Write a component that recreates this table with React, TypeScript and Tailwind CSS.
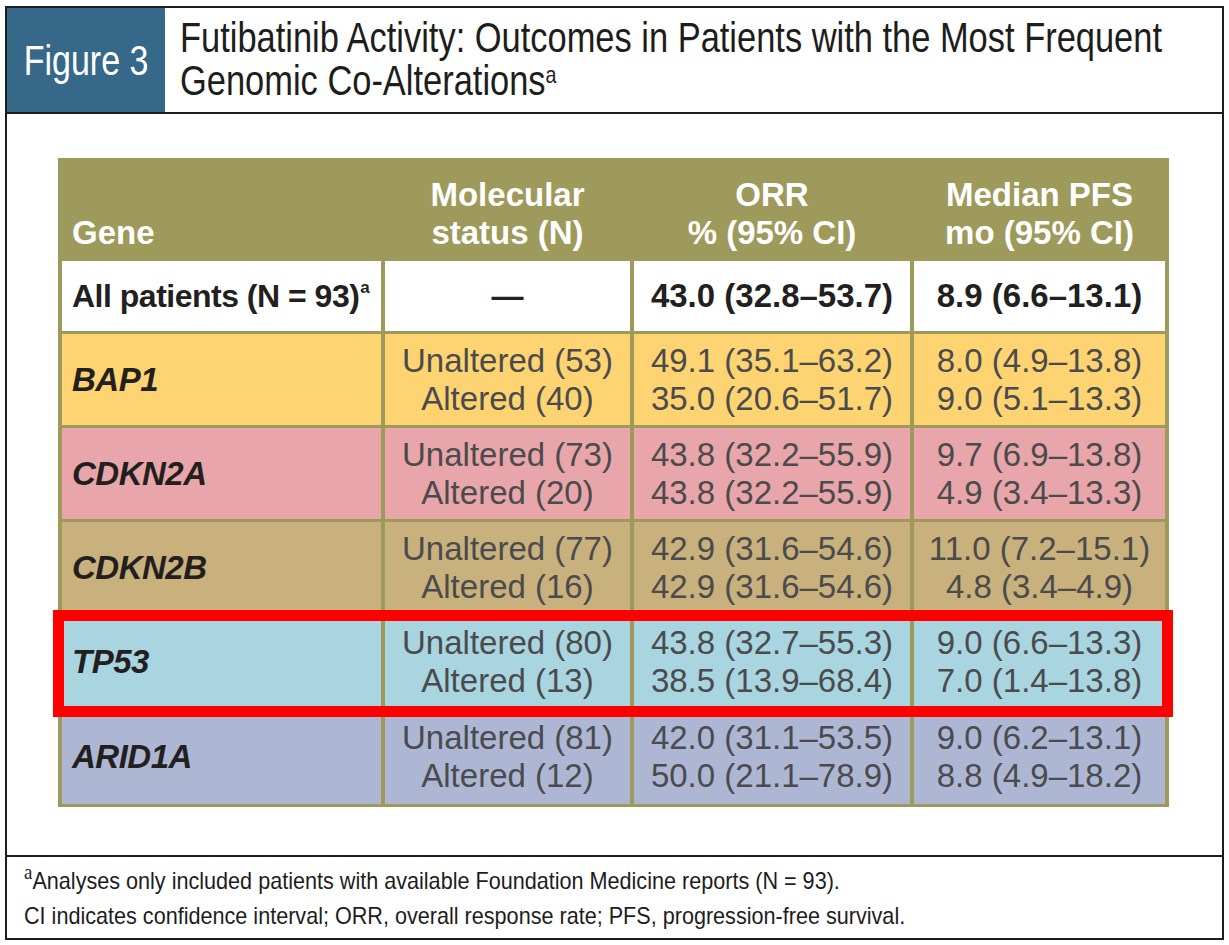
const sans = "font-['Liberation_Sans',Arial,sans-serif]";
const squeeze = 'inline-block whitespace-nowrap';

type Row = {
  gene: string;
  bg: string;
  status: [string, string];
  orr: [string, string];
  pfs: [string, string];
  highlight?: boolean;
  last?: boolean;
};

const rows: Row[] = [
  {
    gene: 'BAP1',
    bg: 'bg-[#fdd471]',
    status: ['Unaltered (53)', 'Altered (40)'],
    orr: ['49.1 (35.1–63.2)', '35.0 (20.6–51.7)'],
    pfs: ['8.0 (4.9–13.8)', '9.0 (5.1–13.3)'],
  },
  {
    gene: 'CDKN2A',
    bg: 'bg-[#e8a6aa]',
    status: ['Unaltered (73)', 'Altered (20)'],
    orr: ['43.8 (32.2–55.9)', '43.8 (32.2–55.9)'],
    pfs: ['9.7 (6.9–13.8)', '4.9 (3.4–13.3)'],
  },
  {
    gene: 'CDKN2B',
    bg: 'bg-[#c8b17c]',
    status: ['Unaltered (77)', 'Altered (16)'],
    orr: ['42.9 (31.6–54.6)', '42.9 (31.6–54.6)'],
    pfs: ['11.0 (7.2–15.1)', '4.8 (3.4–4.9)'],
  },
  {
    gene: 'TP53',
    bg: 'bg-[#a8d5e0]',
    status: ['Unaltered (80)', 'Altered (13)'],
    orr: ['43.8 (32.7–55.3)', '38.5 (13.9–68.4)'],
    pfs: ['9.0 (6.6–13.3)', '7.0 (1.4–13.8)'],
    highlight: true,
  },
  {
    gene: 'ARID1A',
    bg: 'bg-[#adb7d4]',
    status: ['Unaltered (81)', 'Altered (12)'],
    orr: ['42.0 (31.1–53.5)', '50.0 (21.1–78.9)'],
    pfs: ['9.0 (6.2–13.1)', '8.8 (4.9–18.2)'],
    last: true,
  },
];

const cols = 'grid grid-cols-[319px_245px_276px_251px] gap-x-[4px]';

function Pair({ lines, bg }: { lines: [string, string]; bg: string }) {
  return (
    <div className={`${bg} flex flex-col items-center justify-center text-[33px] leading-[38px] text-[#4b4b4d]`}>
      <span>{lines[0]}</span>
      <span>{lines[1]}</span>
    </div>
  );
}

export default function App() {
  return (
    <div className={`${sans} h-[945px] w-[1229px] overflow-hidden bg-white pt-[6px] pl-[5px]`}>
      <div className="flex h-[934px] w-[1219px] flex-col border-2 border-[#1d1d1b]">
        {/* HEADER */}
        <div className="flex h-[106px] shrink-0 border-b-2 border-[#1d1d1b]">
          <div className="flex w-[158px] shrink-0 items-center justify-center overflow-hidden bg-[#366889] pt-[2px] text-[42px] leading-[42px] text-white">
            <span className={`${squeeze} origin-center scale-x-[0.81]`}>Figure 3</span>
          </div>
          <div className="min-w-0 flex-1 overflow-hidden pl-[15px] pt-[8px] text-[42px] leading-[43px] text-[#1d1d1b]">
            <div>
              <span className={`${squeeze} origin-left scale-x-[0.82]`}>
                Futibatinib Activity: Outcomes in Patients with the Most Frequent
              </span>
            </div>
            <div>
              <span className={`${squeeze} origin-left scale-x-[0.82]`}>
                Genomic Co-Alterations
                <sup className="text-[24px]">a</sup>
              </span>
            </div>
          </div>
        </div>

        {/* TABLE */}
        <div className="flex-1 pt-[44px] pl-[51px]">
          <div className="flex w-[1111px] flex-col gap-y-[3px] bg-[#9e9a5c] px-[4px] pb-[3px] pt-[4px]">
            <div className={`${cols} h-[95px] text-[33px] font-bold leading-[38px] text-white`}>
              <div className="flex items-end pb-[5px] pl-[10px]">Gene</div>
              <div className="flex flex-col items-center justify-end pb-[5px]">
                <span>Molecular</span>
                <span>status (N)</span>
              </div>
              <div className="flex flex-col items-center justify-end pb-[5px]">
                <span>ORR</span>
                <span>% (95% CI)</span>
              </div>
              <div className="flex flex-col items-center justify-end pb-[5px]">
                <span>Median PFS</span>
                <span>mo (95% CI)</span>
              </div>
            </div>

            <div className={`${cols} mt-[1px] h-[70px] text-[32px] font-bold text-[#231f20]`}>
              <div className="flex items-center bg-white pl-[10px] tracking-[-0.5px]">
                All patients (N = 93)
                <sup className="ml-[1px] text-[17px]">a</sup>
              </div>
              <div className="flex items-center justify-center bg-white">—</div>
              <div className="flex items-center justify-center bg-white text-[33px]">43.0 (32.8–53.7)</div>
              <div className="flex items-center justify-center bg-white text-[33px]">8.9 (6.6–13.1)</div>
            </div>

            {rows.map((r) => (
              <div
                key={r.gene}
                className={`${cols} relative ${r.last ? 'h-[94px]' : 'h-[91px]'}`}
              >
                <div className={`${r.bg} flex items-center pl-[10px] text-[33px] font-bold italic tracking-[-0.5px] text-[#231f20]`}>
                  {r.gene}
                </div>
                <Pair lines={r.status} bg={r.bg} />
                <Pair lines={r.orr} bg={r.bg} />
                <Pair lines={r.pfs} bg={r.bg} />
                {r.highlight && (
                  <div className="pointer-events-none absolute -top-[6px] -bottom-[10px] -left-[9px] -right-[8px] z-10 border-[11px] border-[#ff0000]" />
                )}
              </div>
            ))}
          </div>
        </div>

        {/* FOOTNOTE */}
        <div className="h-[83px] shrink-0 overflow-hidden border-t-2 border-[#1d1d1b] pl-[17px] pt-[6px] text-[24px] leading-[35px] text-[#1d1d1b]">
          <div>
            <span className={`${squeeze} origin-left scale-x-[0.9]`}>
              <sup className="font-['Liberation_Serif',serif] text-[21px]">a</sup>
              Analyses only included patients with available Foundation Medicine reports (N = 93).
            </span>
          </div>
          <div>
            <span className={`${squeeze} origin-left scale-x-[0.9]`}>
              CI indicates confidence interval; ORR, overall response rate; PFS, progression-free survival.
            </span>
          </div>
        </div>
      </div>
    </div>
  );
}
